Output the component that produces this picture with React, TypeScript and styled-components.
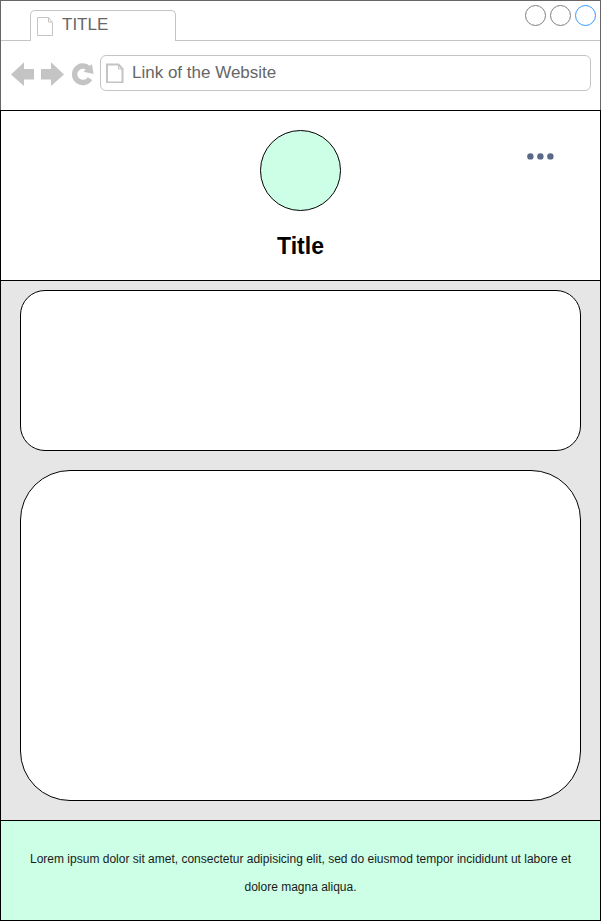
import React from "react";
import styled, { createGlobalStyle } from "styled-components";

const LINE = "#c4c4c4";
const GREY = "#666666";
const MINT = "#ccffe6";

const GlobalStyle = createGlobalStyle`
  *, *::before, *::after { box-sizing: border-box; }
  body {
    margin: 0;
    background: #ffffff;
    font-family: "Liberation Sans", Arial, Helvetica, sans-serif;
  }
  svg { display: block; }
`;

const Window = styled.div`
  display: flex;
  flex-direction: column;
  min-height: 100vh;
`;

const Chrome = styled.header`
  border: 1px solid ${GREY};
  border-bottom: 0;
`;

const TabStrip = styled.div`
  display: flex;
  height: 40px;
`;

const StripStart = styled.div`
  width: 29px;
  border-bottom: 1px solid ${LINE};
`;

const StripEnd = styled.div`
  flex: 1;
  display: flex;
  justify-content: flex-end;
  align-items: flex-start;
  gap: 4px;
  padding: 4px 4px 0 0;
  border-bottom: 1px solid ${LINE};
`;

const Tab = styled.button`
  display: flex;
  align-items: flex-start;
  gap: 8px;
  width: 146px;
  margin-top: 9px;
  padding: 5px 6px 0;
  border: 1px solid ${LINE};
  border-bottom: 0;
  border-radius: 5px 5px 0 0;
  background: transparent;
  color: ${GREY};
  font: 17px/18px "Liberation Sans", Arial, sans-serif;
`;

const WindowButton = styled.button<{ $color: string }>`
  width: 21px;
  height: 21px;
  padding: 0;
  border: 1px solid ${(p) => p.$color};
  border-radius: 50%;
  background: transparent;
`;

const Toolbar = styled.nav`
  display: flex;
  align-items: center;
  gap: 6px;
  padding: 14px 9px 19px 10px;
`;

const IconButton = styled.button`
  flex: none;
  padding: 0;
  border: 0;
  background: transparent;
  color: ${LINE};
`;

const AddressBar = styled.label`
  flex: 1;
  display: flex;
  align-items: center;
  gap: 8px;
  height: 36px;
  padding: 0 5px;
  border: 1px solid ${LINE};
  border-radius: 6px;
`;

const AddressInput = styled.input`
  flex: 1;
  min-width: 0;
  height: 20px;
  padding: 0;
  border: 0;
  outline: 0;
  background: transparent;
  color: ${GREY};
  font: 17px/20px "Liberation Sans", Arial, sans-serif;
`;

const Page = styled.div`
  flex: 1;
  display: flex;
  flex-direction: column;
  border: 1px solid #000000;
`;

const Hero = styled.section`
  display: grid;
  grid-template-columns: 1fr auto 1fr;
  justify-items: center;
  padding: 19px 0 20px;
  border-bottom: 1px solid #000000;
`;

const Avatar = styled.div`
  grid-column: 2;
  width: 81px;
  height: 81px;
  border: 1px solid #000000;
  border-radius: 50%;
  background: ${MINT};
`;

const MenuButton = styled.button`
  grid-column: 3;
  justify-self: end;
  align-self: start;
  margin: 22px 46px 0 0;
  padding: 0;
  border: 0;
  background: transparent;
  color: #596987;
`;

const Title = styled.h1`
  grid-column: 1 / -1;
  margin: 21px 0 0;
  font-size: 23px;
  line-height: 28px;
  color: #000000;
`;

const Content = styled.main`
  flex: 1;
  display: flex;
  flex-direction: column;
  gap: 19px;
  padding: 9px 19px 19px;
  background: #e6e6e6;
`;

const Panel = styled.section<{ $grow: number; $height: number; $radius: number }>`
  flex: ${(p) => p.$grow} 0 auto;
  min-height: ${(p) => p.$height}px;
  border: 1px solid #000000;
  border-radius: ${(p) => p.$radius}px;
  background: #ffffff;
`;

const Footer = styled.footer`
  padding: 24px 20px 19px;
  border-top: 1px solid #000000;
  background: ${MINT};
  color: #1a1a1a;
  font-size: 12px;
  line-height: 28px;
  text-align: center;
`;

const FooterText = styled.p`
  margin: 0;
`;

export default function App() {
  return (
    <>
      <GlobalStyle />
      <Window>
        <Chrome>
          <TabStrip>
            <StripStart />
            <Tab type="button">
              <svg width="17" height="20" viewBox="0 0 17 20" fill="none" stroke={LINE} aria-hidden="true">
                <path d="M.5 1.5H11.5L15.5 6.5V19.5H.5Z" />
                <path d="M11.5 1.5V6H15.5" />
              </svg>
              <span>TITLE</span>
            </Tab>
            <StripEnd>
              <WindowButton type="button" aria-label="Minimize" $color="#808080" />
              <WindowButton type="button" aria-label="Maximize" $color="#808080" />
              <WindowButton type="button" aria-label="Close" $color="#3399ff" />
            </StripEnd>
          </TabStrip>
          <Toolbar aria-label="Browser">
            <IconButton type="button" aria-label="Back">
              <svg width="24" height="26" viewBox="0 0 24 26" fill="currentColor">
                <path d="M0 14.5 13 2.3V9H23V19.5H13V26Z" />
              </svg>
            </IconButton>
            <IconButton type="button" aria-label="Forward">
              <svg width="24" height="26" viewBox="0 0 24 26" fill="currentColor">
                <path d="M23 14.5 10 2.3V9H0V19.5H10V26Z" />
              </svg>
            </IconButton>
            <IconButton type="button" aria-label="Reload">
              <svg width="23" height="26" viewBox="0 0 23 26" fill="none">
                <path d="M19 18.6A8.3 8.3 0 1 1 17.6 8.2" stroke="currentColor" strokeWidth="5.4" />
                <path d="M20.9 4 22.6 14 12.5 11.8Z" fill="currentColor" />
              </svg>
            </IconButton>
            <AddressBar>
              <svg width="18" height="20" viewBox="0 0 18 20" fill="none" stroke={LINE} aria-hidden="true">
                <path d="M1 1.5H12.5L16.5 6V19.5H1Z" strokeWidth="2" />
                <path d="M12.5 1.5V6H16.5" />
              </svg>
              <AddressInput type="text" aria-label="Address" defaultValue="Link of the Website" />
            </AddressBar>
          </Toolbar>
        </Chrome>
        <Page>
          <Hero>
            <Avatar />
            <MenuButton type="button" aria-label="More options">
              <svg width="28" height="8" viewBox="0 0 28 8" fill="currentColor">
                <circle cx="4.4" cy="4.4" r="3.2" />
                <circle cx="14.4" cy="4.4" r="3.2" />
                <circle cx="24.4" cy="4.4" r="3.2" />
              </svg>
            </MenuButton>
            <Title>Title</Title>
          </Hero>
          <Content>
            <Panel $grow={0} $height={161} $radius={25} />
            <Panel $grow={1} $height={331} $radius={50} />
          </Content>
          <Footer>
            <FooterText>
              Lorem ipsum dolor sit amet, consectetur adipisicing elit, sed do eiusmod tempor incididunt ut labore et
              dolore magna aliqua.
            </FooterText>
          </Footer>
        </Page>
      </Window>
    </>
  );
}
